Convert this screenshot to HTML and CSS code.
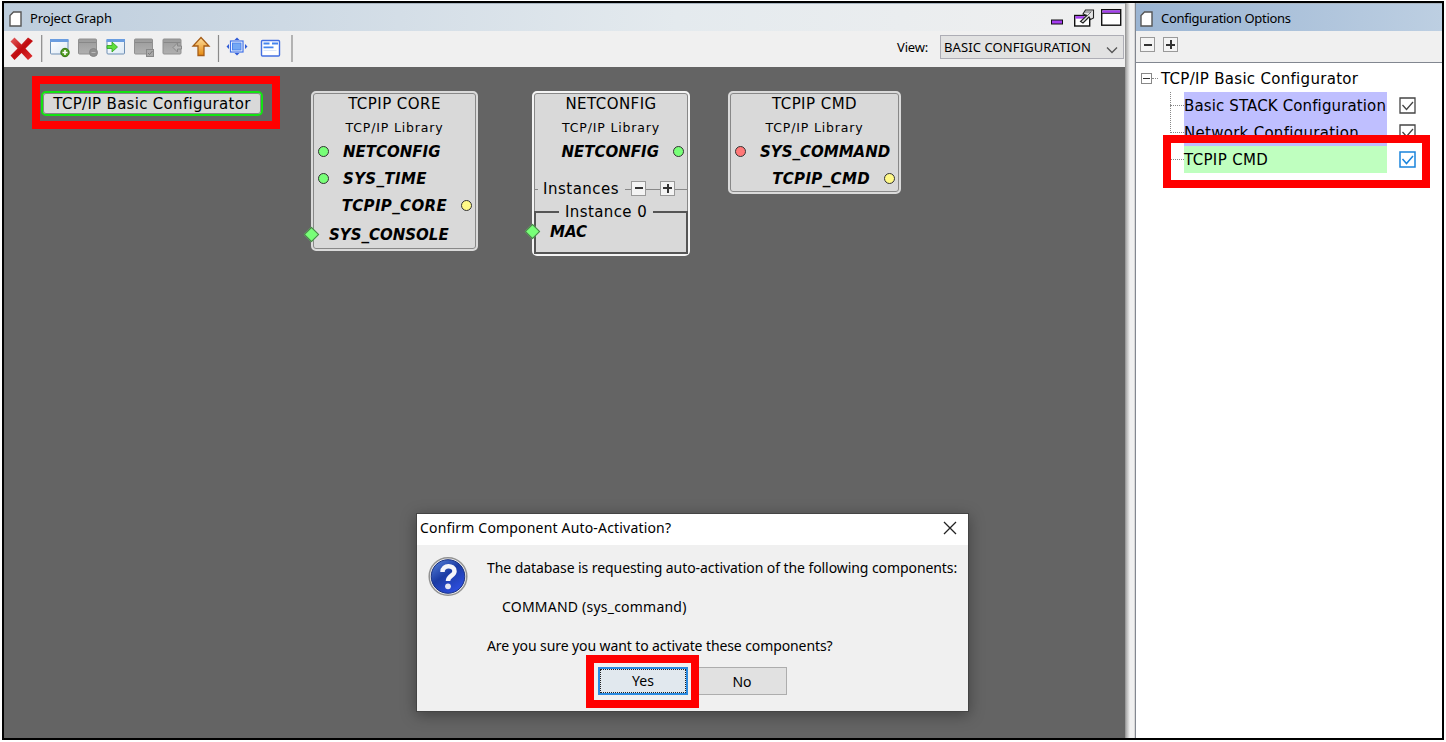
FILE: index.html
```html
<!DOCTYPE html>
<html lang="en">
<head>
<meta charset="utf-8">
<title>Project Graph</title>
<link rel="stylesheet" href="styles.css">
</head>
<body>
<div class="frame">
  <section class="graph-panel">
    <header class="titlebar">
      <svg class="doc" width="13" height="16" viewBox="0 0 13 16"><path d="M4.500 1H12v14H1V4.500z" fill="#fff" stroke="#555" stroke-width="1.400"/></svg>
      <span class="title t-graph">Project Graph</span>
      <svg class="winbtns" width="72" height="22" viewBox="0 0 72 22">
        <rect x="1.500" y="14" width="11" height="4" fill="#a53df0" stroke="#111"/>
        <rect x="24.700" y="9.500" width="15" height="10.500" fill="#fff" stroke="#111" stroke-width="1.400"/>
        <path d="M25.400 11.400h9" stroke="#a53df0" stroke-width="2.500"/>
        <path d="M30.500 15.500l6.500-6-4-1.500 2.500-4h8v8l-3 1.500-1.500-2.500-6 6z" fill="#e4e4e4" stroke="#222" stroke-width="1.100"/>
        <path d="M35 6l6 0M41.500 5.500l-4 4" stroke="#555" stroke-width=".8"/>
        <rect x="51.700" y="3.700" width="19" height="15.500" fill="#fff" stroke="#111" stroke-width="1.400"/>
        <path d="M52.400 5.600h17.600" stroke="#a53df0" stroke-width="2.500"/><path d="M52 7.300h18.500" stroke="#111"/>
      </svg>
    </header>
    <div class="toolbar">
      <svg width="300" height="36" viewBox="4 31 300 36">
        <defs>
          <linearGradient id="red" x1="0" y1="0" x2="1" y2="1"><stop offset="0" stop-color="#e46060"/><stop offset=".5" stop-color="#c00a0e"/><stop offset="1" stop-color="#e03030"/></linearGradient>
          <linearGradient id="org" x1="0" y1="0" x2="0" y2="1"><stop offset="0" stop-color="#ffe0a0"/><stop offset="1" stop-color="#e58a10"/></linearGradient>
          <linearGradient id="gry" x1="0" y1="0" x2="0" y2="1"><stop offset="0" stop-color="#9b9b9b"/><stop offset="1" stop-color="#b0b0b0"/></linearGradient>
          <linearGradient id="win" x1="0" y1="0" x2="1" y2="1"><stop offset="0" stop-color="#fff"/><stop offset="1" stop-color="#dce9f5"/></linearGradient>
        </defs>
        <path d="M14.500 37.500l7 7 6.500-7 5 3.500-7.500 7.500 7 7.500-4.500 4-6.500-7-7 7-4-4.500 7-7-7-7z" fill="url(#red)"/>
        <path d="M41.700 35v27M218.500 35v27M292 35v27" stroke="#8a8a8a" stroke-width="1.200"/>
        <g><rect x="50.500" y="39.500" width="17.500" height="14.500" rx="1" fill="url(#win)" stroke="#6f8fb4"/><path d="M50 40.500h18.500" stroke="#6a9de0" stroke-width="3"/><circle cx="65" cy="52.500" r="4.200" fill="#4f9a20" stroke="#327510"/><path d="M62.500 52.500h5M65 50v5" stroke="#fff" stroke-width="1.600"/></g>
        <g><rect x="78.500" y="39" width="18" height="15" rx="1" fill="url(#gry)" stroke="#909090"/><path d="M79 42.500h17" stroke="#888"/><circle cx="93.500" cy="52.500" r="4" fill="#8f8f8f" stroke="#858585"/><path d="M91.500 52.500h4" stroke="#bbb"/></g>
        <g><rect x="107" y="39.500" width="17.500" height="14.500" rx="1" fill="url(#win)" stroke="#6f8fb4"/><path d="M106.500 40.500h18.500" stroke="#6a9de0" stroke-width="3"/><path d="M107 45.500h5v-3.500l5.500 5-5.500 5v-3.500h-5z" fill="#5fe03c" stroke="#2fa020" stroke-width=".8"/></g>
        <g><rect x="134.500" y="39" width="18" height="15" rx="1" fill="url(#gry)" stroke="#909090"/><path d="M135 42.500h17" stroke="#888"/><rect x="146.500" y="49.500" width="7" height="7" fill="#a8a8a8" stroke="#888"/><path d="M148 53l1.500 1.500 3-3.500" fill="none" stroke="#777"/></g>
        <g><rect x="163" y="39" width="18" height="15" rx="1" fill="url(#gry)" stroke="#909090"/><path d="M163.500 42.500h17" stroke="#888"/><path d="M181.500 46h-4v-3l-4.500 4.500 4.500 4.500v-3h4z" fill="#b5b5b5" stroke="#888"/></g>
        <path d="M201 37.500l8 8.500h-5v9.500h-6v-9.500h-5z" fill="url(#org)" stroke="#a65c16" stroke-width="1.300"/>
        <rect x="230.500" y="41" width="12.500" height="11" fill="#fff" stroke="#3e70e8" stroke-width="1.200"/><rect x="232.500" y="43" width="8.500" height="7" fill="#74a8f4" stroke="#4d83ec"/>
        <path d="M237 37.500l2.500 2.500h-5zM237 55.500l2.500-2.500h-5zM226.500 46.500l2.500-2.500v5zM247.500 46.500l-2.500-2.500v5z" fill="#2f5bd6"/>
        <rect x="261.500" y="40.500" width="18" height="15.500" rx="1" fill="#fff" stroke="#436fe2" stroke-width="1.400"/><path d="M263.500 43.500h6M272 43.500h6M263.500 47.300h10" stroke="#4685ee" stroke-width="1.800"/><path d="M263.500 50.500h13" stroke="#dbe7fa"/>
      </svg>
      <label class="view-label">View:</label>
      <div class="combo"><span>BASIC CONFIGURATION</span><svg width="12" height="8" viewBox="0 0 12 8"><path d="M1 1.500l5 5 5-5" fill="none" stroke="#555" stroke-width="1.300"/></svg></div>
    </div>
    <main class="canvas"></main>
  </section>
  <div class="splitter"></div>
  <aside class="options-panel">
    <header class="titlebar blue">
      <svg class="doc" width="13" height="16" viewBox="0 0 13 16"><path d="M4.500 1H12v14H1V4.500z" fill="#fff" stroke="#555" stroke-width="1.400"/></svg>
      <span class="title t-options">Configuration Options</span>
    </header>
    <div class="tree-tools"><i class="pm minus"></i><i class="pm plus"></i></div>
    <div class="tree">
      <div class="root"><i class="expander"></i><i class="dots"></i><span>TCP/IP Basic Configurator</span></div>
      <div class="leaves">
        <div class="leaf"><i class="dots"></i><span class="leaf-name n1">Basic STACK Configuration</span><svg class="check" width="17" height="17" viewBox="0 0 17 17"><path d="M1 1h15v15H1zM3.500 8l4 4.500L14 5" fill="none" stroke="#444" stroke-width="1.300"/></svg></div>
        <div class="leaf"><i class="dots"></i><span class="leaf-name n2">Network Configuration</span><svg class="check" width="17" height="17" viewBox="0 0 17 17"><path d="M1 1h15v15H1zM3.500 8l4 4.500L14 5" fill="none" stroke="#444" stroke-width="1.300"/></svg></div>
        <div class="leaf on"><i class="dots"></i><span class="leaf-name n3">TCPIP CMD</span><svg class="check" width="17" height="17" viewBox="0 0 17 17"><path d="M1 1h15v15H1zM3.500 8l4 4.500L14 5" fill="none" stroke="#1a84dc" stroke-width="1.500"/></svg></div>
      </div>
    </div>
  </aside>
</div>

<div class="node selected"><span class="w-config">TCP/IP Basic Configurator</span></div>

<div class="node core">
  <div class="name">TCPIP CORE</div><div class="lib">TCP/IP Library</div>
  <div class="port in"><i class="dot green"></i><b>NETCONFIG</b></div>
  <div class="port in"><i class="dot green"></i><b class="wide">SYS_TIME</b></div>
  <div class="port out"><b class="wide">TCPIP_CORE</b><i class="dot yellow"></i></div>
  <div class="port dep"><b>SYS_CONSOLE</b></div>
  <i class="diamond d-core"></i>
</div>

<div class="node net">
  <div class="name">NETCONFIG</div><div class="lib">TCP/IP Library</div>
  <div class="port out"><b>NETCONFIG</b><i class="dot green"></i></div>
  <div class="instances"><span class="rule r1"></span><span>Instances</span><span class="rule r2"></span><i class="pm minus"></i><span class="rule r3"></span><i class="pm plus"></i><span class="rule r4"></span></div>
  <fieldset class="instance"><legend>Instance 0</legend><b>MAC</b></fieldset>
  <i class="diamond d-net"></i>
</div>

<div class="node cmd">
  <div class="name">TCPIP CMD</div><div class="lib">TCP/IP Library</div>
  <div class="port in"><i class="dot red"></i><b>SYS_COMMAND</b></div>
  <div class="port out"><b class="wide">TCPIP_CMD</b><i class="dot yellow"></i></div>
</div>

<div class="dialog">
  <div class="dlg-title"><span>Confirm Component Auto-Activation?</span><svg width="14" height="14" viewBox="0 0 14 14"><path d="M1 1l12 12M13 1L1 13" stroke="#222" stroke-width="1.300"/></svg></div>
  <div class="dlg-body">
    <svg class="question" width="40" height="41" viewBox="0 0 40 41">
      <defs><linearGradient id="q" x1="0" y1="0" x2="0.700" y2="1"><stop offset="0" stop-color="#5b86dc"/><stop offset=".5" stop-color="#1b3ba4"/><stop offset="1" stop-color="#2e4fe0"/></linearGradient></defs>
      <circle cx="20" cy="20.500" r="18.800" fill="#f4f4f4" stroke="#929292" stroke-width="1.500"/><circle cx="20" cy="20.500" r="16.800" fill="url(#q)" stroke="#183080"/>
      <path d="M14.500 16c-.3-7.500 12-7.500 12-.8 0 4.500-6.500 4.500-6.500 9.800" fill="none" stroke="#f5f5fa" stroke-width="4.500"/><circle cx="20" cy="30.300" r="2.900" fill="#e4e6f2"/>
    </svg>
    <div class="message"><p class="m1">The database is requesting auto-activation of the following components:</p><p class="m2">COMMAND (sys_command)</p><p class="m3">Are you sure you want to activate these components?</p></div>
    <div class="buttons"><button class="yes"><span>Yes</span></button><button class="no">No</button></div>
  </div>
</div>

<div class="mark mark-config"></div><div class="mark mark-cmd"></div><div class="mark mark-yes"></div>
</body>
</html>
```
FILE: styles.css
```css
* { box-sizing: border-box; }
body { margin: 0; width: 1446px; height: 742px; overflow: hidden; background: #fff; padding: 1px 2px 2px 2px; color: #000; font-family: "DejaVu Sans", sans-serif; position: relative; }
.frame { display: flex; width: 1442px; height: 739px; border: 2px solid #000; background: #f0f0f0; }
.graph-panel { width: 1122px; display: flex; flex-direction: column; border-right: 1px solid #999; }
.titlebar { height: 28px; flex: none; display: flex; align-items: center; padding: 0 0 0 5px; background: linear-gradient(90deg, #bdcddd, #e4eaee 60%, #f0f0f0); border-top: 1px solid #a9b5c0; }
.titlebar.blue { background: linear-gradient(90deg, #9bb5d3, #bdcfe2); padding-left: 4px; }
.title { font: 13px "Noto Sans", sans-serif; margin-left: 8px; letter-spacing: -.3px; white-space: nowrap; }
.t-graph { letter-spacing: -.15px; }
.winbtns { margin-left: auto; margin-right: 3px; margin-top: -2px; }
.doc { margin-top: 2px; }
.toolbar { height: 36px; flex: none; display: flex; align-items: center; background: #f0f0f0; }
.view-label { margin-left: auto; font: 13px "Noto Sans", sans-serif; letter-spacing: -.2px; margin-right: 12px; margin-top: -5px; }
.combo { width: 184px; height: 24px; flex: none; border: 1px solid #adadb5; background: #e2e2e2; display: flex; align-items: center; justify-content: space-between; padding: 0 5px 0 3px; margin-right: 1px; margin-top: -4px; font: 13px "Noto Sans", sans-serif; letter-spacing: .1px; white-space: nowrap; }
.combo span { line-height: 18px; margin-top: -1px; }
.combo svg { margin-top: 5px; }
.canvas { flex: 1; background: #646464; }
.splitter { width: 9px; flex: none; background: linear-gradient(90deg, #aaa, #f0f0f0 4px); border-right: 1px solid #d8d8d8; }
.options-panel { flex: 1; display: flex; flex-direction: column; border-left: 1px solid #828790; }
.tree-tools { height: 31px; flex: none; display: flex; gap: 8px; padding: 6px 0 0 4px; }
.pm { display: block; width: 15px; height: 15px; flex: none; border: 1px solid #999; background: linear-gradient(#333, #333) center / 8px 2px no-repeat, #f4f4f4; }
.pm.plus { background: linear-gradient(#333, #333) center / 9px 2px no-repeat, linear-gradient(#333, #333) center / 2px 9px no-repeat, #f4f4f4; }
.tree { flex: 1; background: #fff; border-top: 1px solid #828790; padding-top: 2px; font-size: 15px; white-space: nowrap; }
.root { display: flex; align-items: center; height: 27px; padding-left: 5px; letter-spacing: .3px; }
.expander { width: 11px; height: 11px; border: 1px solid #888; background: linear-gradient(#333, #333) center / 7px 1px no-repeat; }
.root .dots { width: 6px; margin-right: 3px; }
.dots { border-top: 1px dotted #888; width: 13px; flex: none; }
.leaves { margin-left: 34px; background: repeating-linear-gradient(#888 0 1px, transparent 1px 2px) 0 0 / 1px 41px no-repeat; }
.leaf { display: flex; align-items: center; height: 27px; }
.leaf .dots { width: 14px; }
.leaf-name { width: 203px; height: 27px; line-height: 28px; background: #bfbfff; letter-spacing: .13px; }
.n2 { letter-spacing: .28px; }
.n3 { letter-spacing: .35px; }
.on .leaf-name { background: #bfffbf; }
.check { margin-left: 12px; }

.node { position: absolute; border: 2px solid #dadada; border-radius: 5px; background: #d9d9d9; box-shadow: inset 0 0 0 1px #888; font-size: 15px; white-space: nowrap; }
.selected { left: 41px; top: 91px; width: 222px; height: 25px; border-color: #12e312; text-align: center; line-height: 23px; letter-spacing: .3px; }
.core { left: 311px; top: 91px; width: 167px; height: 160px; }
.net { left: 532px; top: 91px; width: 158px; height: 165px; border-color: #f4f4f4; }
.cmd { left: 728px; top: 91px; width: 173px; height: 103px; }
.name { height: 23px; line-height: 23px; text-align: center; letter-spacing: .45px; }
.lib { height: 22px; line-height: 23px; font-size: 12.5px; text-align: center; letter-spacing: .85px; }
.port { height: 27px; display: flex; align-items: center; font-style: italic; letter-spacing: 0; }
.port .wide { letter-spacing: .35px; }
.port.in { padding-left: 5px; }
.port.in b { margin-left: 14px; }
.port.out { justify-content: flex-end; padding-right: 4px; }
.port.out b { margin-right: 14px; }
.port.dep { padding-left: 16px; margin-top: 2px; }
.dot { width: 11px; height: 11px; border-radius: 50%; border: 1px solid #333; flex: none; }
.green { background: #78ff78; } .yellow { background: #fff987; } .red { background: #ff7878; }
.diamond { position: absolute; width: 11px; height: 11px; background: #78ff78; border: 1px solid #4a804a; transform: rotate(45deg); }
.d-core { left: -7px; top: 136px; } .d-net { left: -7px; top: 133px; }
.instances { display: flex; align-items: center; height: 20px; margin-top: 14px; letter-spacing: .5px; }
.instances .pm { margin-top: -2px; }
.rule { height: 1px; background: #888; }
.r1 { width: 4px; margin-right: 5px; } .r2 { width: 6px; margin-left: 6px; } .r3 { width: 14px; } .r4 { flex: 1; }
.instance { margin: 4px 0 0; padding: 0 0 0 14px; height: 51px; border: 2px solid #555; font-style: italic; }
.instance legend { margin-left: 9px; padding: 0 6px; line-height: 18px; font-style: normal; letter-spacing: .4px; }
.instance b { display: block; line-height: 22px; }

.dialog { position: absolute; left: 416px; top: 513px; width: 553px; height: 199px; border: 1px solid #444; background: #f0f0f0; box-shadow: 0 3px 14px rgba(0,0,0,.35); font: 14px "Noto Sans", sans-serif; }
.dlg-title { height: 31px; display: flex; align-items: center; justify-content: space-between; background: #fff; padding: 0 11px 3px 3px; white-space: nowrap; letter-spacing: .18px; }
.dlg-title span { margin-top: -1px; }
.dlg-body { display: grid; grid-template-columns: 59px 1fr; padding: 11px 0 0 11px; }
.message { line-height: 20px; white-space: nowrap; padding-top: 2px; }
.message p { margin: 0 0 19px; width: max-content; }
.message .m1 { letter-spacing: -.075px; }
.message .m2 { margin-left: 15px; letter-spacing: .22px; }
.message .m3 { letter-spacing: -.1px; }
.buttons { grid-column: 1 / -1; display: flex; gap: 9px; padding-left: 170px; margin-top: -8px; }
.buttons button { width: 90px; height: 28px; padding: 0; border: 1px solid #adadad; background: #e1e1e1; font: 14px "Noto Sans", sans-serif; color: #000; }
.buttons .yes { border: 2px solid #2b8ae0; background: #e1e8ee; }
.yes span { display: block; height: 24px; line-height: 22px; border: 1px dotted #222; }
.mark { position: absolute; border: 8px solid #f00; }
.mark-config { left: 32px; top: 76px; width: 248px; height: 53px; }
.mark-cmd { left: 1163px; top: 135px; width: 267px; height: 53px; }
.mark-yes { left: 586px; top: 655px; width: 113px; height: 53px; }
```
